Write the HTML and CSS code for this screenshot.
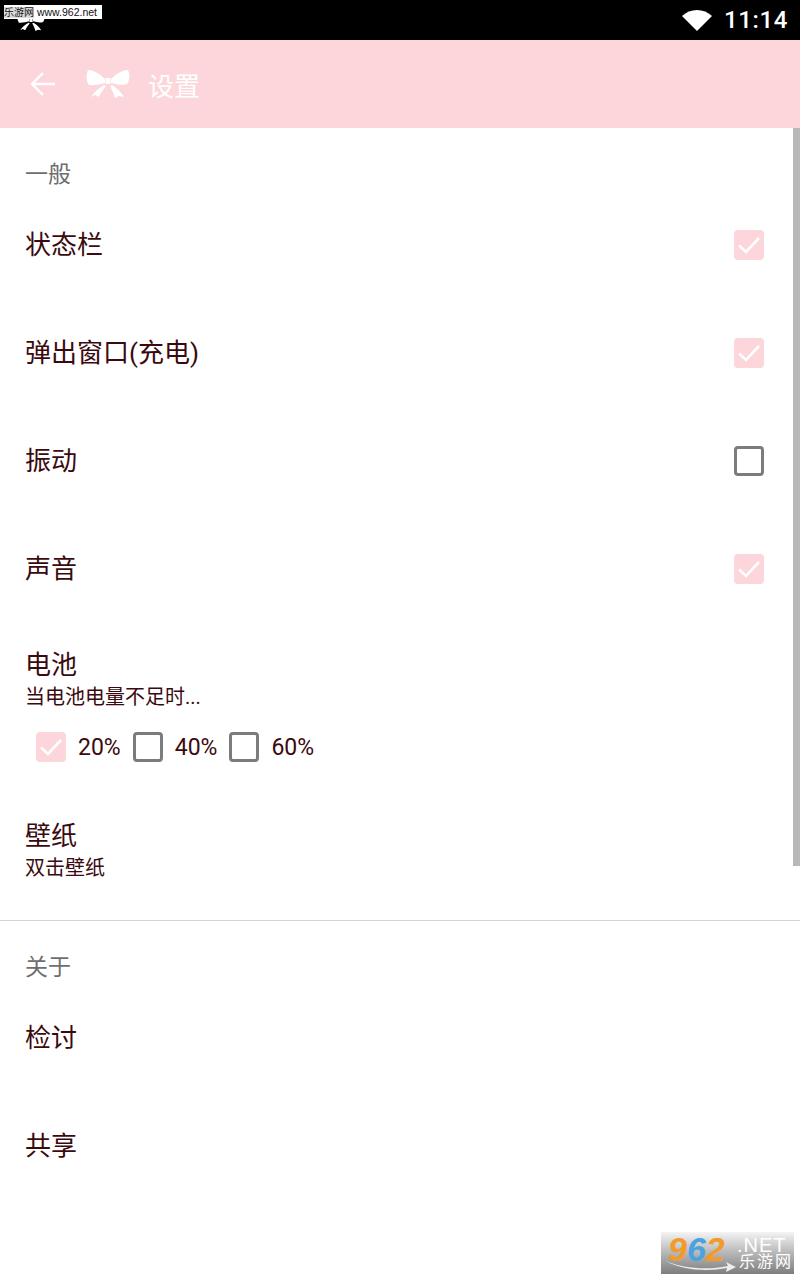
FILE: index.html
```html
<!DOCTYPE html>
<html lang="zh-CN">
<head>
    <meta charset="UTF-8">
    <meta name="viewport" content="width=device-width, initial-scale=1.0">
    <title>设置</title>
    <link rel="stylesheet" href="styles.css">
</head>
<body>
    <svg width="0" height="0" class="defs">
        <symbol id="bow" viewBox="0 0 44 30">
            <path d="M19 10 C14 5 8 1 2 1 C0 6 0 12 3 16 C8 17 14 15 19 14 Z"/>
            <path d="M25 10 C30 5 36 1 42 1 C44 5 44 12 41 15 C36 17 30 15 25 14 Z"/>
            <rect x="19.5" y="9" width="5" height="6"/>
            <path d="M18 16 L20 17 C17 21 14 25 13 28 L9 26 L5 28 C8 23 13 19 18 16 Z"/>
            <path d="M26 16 L24 17 C26 21 28 25 29 29 L33 27 L38 28 C35 23 31 19 26 16 Z"/>
        </symbol>
        <symbol id="tick" viewBox="0 0 30 30">
            <path d="M5 15.5 L12 22 L25 8" fill="none" stroke="#fff" stroke-width="2.6"/>
        </symbol>
    </svg>

    <div class="status-bar">
        <svg class="status-bow"><use href="#bow"/></svg>
        <div class="status-right">
            <svg class="wifi" viewBox="0 0 30 22"><path d="M0 7 C8 -1 22 -1 30 7 L15 22 Z"/></svg>
            <span class="clock">11:14</span>
        </div>
    </div>

    <div class="toolbar">
        <svg class="back" viewBox="0 0 26 26"><path d="M25 13 H3 M13 2 L2 13 L13 24" fill="none" stroke="#fff" stroke-width="2.4"/></svg>
        <svg class="bow"><use href="#bow"/></svg>
        <span class="toolbar-title">设置</span>
    </div>

    <div class="content">
        <div class="scrollbar"></div>

        <div class="section-title first">一般</div>
        <div class="row">
            <span class="row-title">状态栏</span>
            <span class="box on"><svg><use href="#tick"/></svg></span>
        </div>
        <div class="row">
            <span class="row-title">弹出窗口(充电)</span>
            <span class="box on"><svg><use href="#tick"/></svg></span>
        </div>
        <div class="row">
            <span class="row-title">振动</span>
            <span class="box"></span>
        </div>
        <div class="row">
            <span class="row-title">声音</span>
            <span class="box on"><svg><use href="#tick"/></svg></span>
        </div>

        <div class="block battery">
            <div class="row-title">电池</div>
            <div class="row-sub">当电池电量不足时...</div>
            <div class="levels">
                <span class="box on"><svg><use href="#tick"/></svg></span><span class="level">20%</span>
                <span class="box"></span><span class="level">40%</span>
                <span class="box"></span><span class="level">60%</span>
            </div>
        </div>

        <div class="block wallpaper">
            <div class="row-title">壁纸</div>
            <div class="row-sub">双击壁纸</div>
        </div>

        <div class="section-title about">关于</div>
        <div class="row">
            <span class="row-title">检讨</span>
        </div>
        <div class="row">
            <span class="row-title">共享</span>
        </div>
    </div>

    <!-- watermarks -->
    <div class="mark-top"><span class="mark-cn">乐游网</span> www.962.net</div>
    <div class="mark-logo">
        <svg class="swoosh" viewBox="0 0 70 12"><path d="M0 1 C18 9 42 10 62 6 L60 2 L70 7 L60 12 L61 8 C40 12 16 10 0 1 Z"/></svg>
        <span class="logo-num"><span class="orange">9</span><span class="blue">6</span><span class="orange">2</span></span>
        <span class="logo-net">.NET</span>
        <span class="logo-cn">乐游网</span>
    </div>
</body>
</html>
```

FILE: styles.css
```css
* {
    box-sizing: border-box;
}
html, body {
    height: 1280px;
    overflow: hidden;
}
body {
    margin: 0;
    background: white;
    color: #3a0a0e;
    font-family: Roboto, "Noto Sans CJK SC", sans-serif;
    position: relative;
}
.defs {
    position: absolute;
}
.status-bar {
    height: 40px;
    background: black;
    display: flex;
    align-items: center;
    justify-content: space-between;
    padding: 0 12px 0 17px;
}
.status-bow {
    width: 28px;
    height: 20px;
    margin-top: 4px;
    fill: white;
}
.status-right {
    display: flex;
    align-items: center;
    gap: 12px;
}
.wifi {
    width: 30px;
    height: 22px;
    fill: white;
}
.clock {
    color: white;
    font-size: 24px;
    font-weight: 500;
    letter-spacing: 0.6px;
}
.toolbar {
    height: 88px;
    background: #fcd6da;
    display: flex;
    align-items: center;
    padding-left: 30px;
}
.back {
    width: 26px;
    height: 26px;
}
.bow {
    width: 44px;
    height: 30px;
    margin-left: 30px;
    fill: white;
}
.toolbar-title {
    color: white;
    font-size: 26px;
    margin-left: 18px;
}
.content {
    height: 1069px;
    overflow: hidden;
    position: relative;
}
.scrollbar {
    position: absolute;
    top: 0;
    right: 0;
    width: 7px;
    height: 738px;
    background: #b8b8b8;
}
.section-title {
    color: #6e6e6e;
    font-size: 23px;
    line-height: 32px;
    padding-left: 25px;
}
.section-title.first {
    margin-top: 31px;
}
.section-title.about {
    margin-top: 31px;
    padding-top: 0;
}
.row {
    height: 108px;
    display: flex;
    align-items: center;
    justify-content: space-between;
    padding: 0 36px 0 25px;
}
.row-title {
    font-size: 26px;
    line-height: 34px;
}
.row-sub {
    font-size: 20px;
    line-height: 30px;
}
.block {
    padding-left: 25px;
}
.battery {
    height: 196px;
    padding-top: 25px;
}
.wallpaper {
    height: 102px;
    border-bottom: 1px solid #d4d4d4;
}
.levels {
    display: flex;
    align-items: center;
    margin-top: 20px;
    padding-left: 11px;
}
.level {
    font-size: 23px;
    margin: 0 12px 0 12px;
}
.box {
    width: 30px;
    height: 30px;
    border: 3px solid #7c7c7c;
    border-radius: 4px;
    flex: none;
    display: block;
}
.box.on {
    background: #fcd6da;
    border: none;
}
.box svg {
    width: 30px;
    height: 30px;
    display: block;
}
.mark-top {
    position: absolute;
    left: 4px;
    top: 5px;
    width: 98px;
    height: 14px;
    background: white;
    color: #111;
    font-family: "Liberation Sans", "Noto Sans CJK SC", sans-serif;
    font-size: 10.5px;
    line-height: 14px;
    white-space: nowrap;
}
.mark-cn {
    background: #ddd;
    font-size: 10px;
}
.mark-logo {
    position: absolute;
    left: 661px;
    top: 1232px;
    width: 133px;
    height: 42px;
    background: linear-gradient(#f4f4f4, #bcbcbc 45%, #7e7e7e);
    overflow: hidden;
}
.swoosh {
    position: absolute;
    left: 5px;
    top: 28px;
    width: 70px;
    height: 12px;
    fill: #eee;
}
.logo-num {
    position: absolute;
    left: 7px;
    top: 0;
    font-family: "Liberation Sans", sans-serif;
    font-size: 34px;
    line-height: 34px;
    font-weight: bold;
    font-style: italic;
}
.orange {
    color: #f39a2c;
}
.blue {
    color: #4aa3e0;
}
.logo-net {
    position: absolute;
    left: 76px;
    top: 1px;
    color: white;
    font-family: "Liberation Sans", sans-serif;
    font-size: 20px;
    line-height: 24px;
    letter-spacing: 1px;
}
.logo-cn {
    position: absolute;
    left: 78px;
    top: 20px;
    color: white;
    font-size: 16px;
    line-height: 20px;
    letter-spacing: 2px;
}
```
